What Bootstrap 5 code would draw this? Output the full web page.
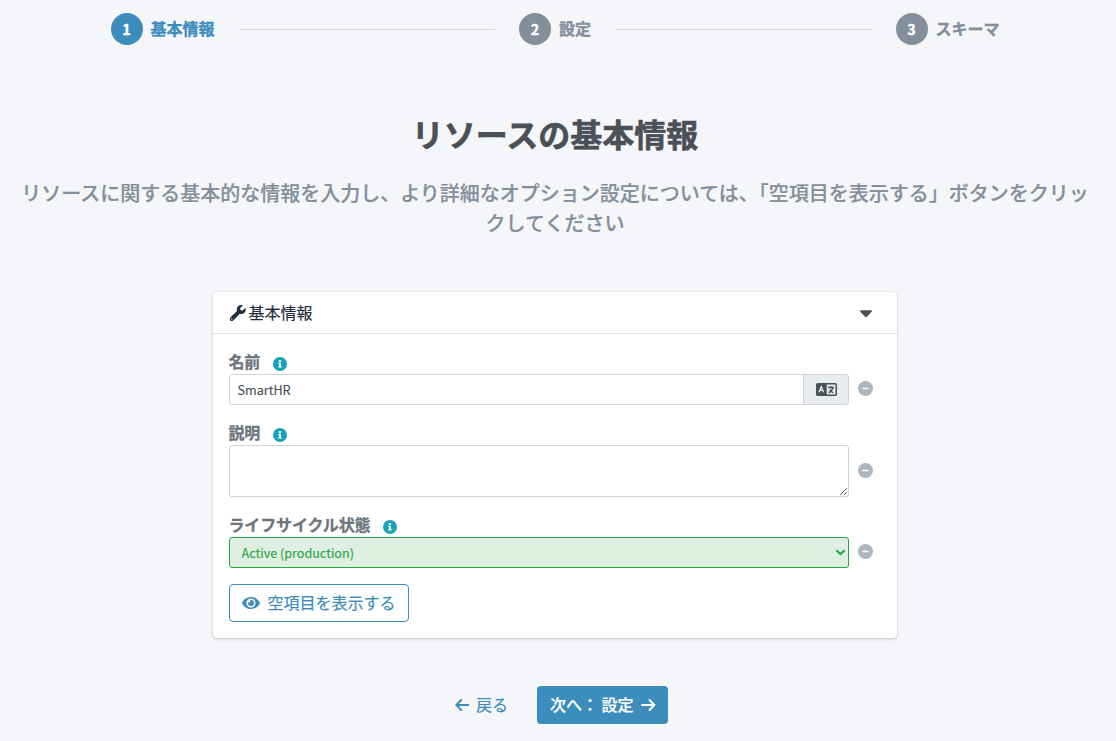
<!DOCTYPE html>
<html lang="ja">
<head>
<meta charset="utf-8">
<meta name="viewport" content="width=device-width, initial-scale=1">
<title>リソースの基本情報</title>
<link href="https://cdn.jsdelivr.net/npm/bootstrap@5.3.0/dist/css/bootstrap.min.css" rel="stylesheet">
<style>
  body { background: #f4f6fa; color: #495057; font-family: "Noto Sans CJK JP", sans-serif; overflow: hidden; }
  svg { display: block; flex: none; }
  .page { width: 1110px; }
  .stepper { width: 937px; height: 58px; }
  .step { padding: 0 24px; font-weight: 700; color: #838f9b; line-height: 24px; -webkit-text-stroke: .35px currentColor; }
  .step.current { color: #3c8dbc; }
  .step-no { width: 32px; height: 32px; background: #838f9b; color: #fff; margin-right: 8px; font-size: 14.4px; }
  .step-name { padding-bottom: 2px; }
  .current .step-no { background: #3c8dbc; }
  .step-line { height: 1px; background: #d3d8dd; }
  .title { font-size: 32px; font-weight: 700; line-height: 38px; margin: 56px 0 26px; color: #495057; -webkit-text-stroke: .6px currentColor; }
  .intro { font-size: 20px; font-weight: 500; line-height: 30px; color: #838f9b; padding: 0 15px; margin-bottom: 54px; -webkit-text-stroke: .2px currentColor; }
  .panel { width: 684px; height: 346px; border: 0; border-radius: 4px; box-shadow: 0 0 1px rgba(0,0,0,.13), 0 1px 3px rgba(0,0,0,.2); }
  .panel-head { height: 42px; padding: 0 25px 0 16px; border-bottom: 1px solid #dee2e6; color: #1f2d3d; }
  .panel-name { padding-bottom: 1px; margin-left: 2.5px; -webkit-text-stroke: .2px currentColor; }
  .caret { margin: 2px 0 0 auto; }
  .panel-form { padding: 16px; }
  .field { margin-bottom: 16px; }
  .field-label { height: 24px; line-height: 22px; font-weight: 700; color: #6c757d; -webkit-text-stroke: .3px currentColor; letter-spacing: -.15px; }
  .field-label span { padding-bottom: 2px; margin-left: -.5px; }
  .field-label svg { margin: 3px 0 0 12.3px; }
  .control-row { width: 644px; }
  .control-row .form-control, .control-row .form-select, .translate { font-size: 12.6px; line-height: 21px; border-radius: 3px; color: #495057; border-color: #ced4da; -webkit-text-stroke: .15px currentColor; }
  .control-row input.form-control { height: 31px; padding: 4px 8px 4px 7.5px; }
  .control-row textarea.form-control { height: 52px; min-height: 52px; padding: 4px 8px; }
  .translate { width: 46px; background: #e9ecef; padding: 0; justify-content: center; }
  .control-row .form-select { height: 31px; padding: 4px 12px 4px 11.5px; color: #28a745; border-color: #28a745; background-color: #dff0e3; background-image: none; }
  .select-arrow { right: 3px; top: 12px; }
  .minus { margin-left: 9px; margin-top: -3px; }
  .minus-tall { margin-top: -1px; }
  .btn { --bs-btn-border-radius: 4px; height: 38px; padding: 0 12px; --bs-btn-color: #3c8dbc; }
  .btn span { padding-bottom: 2px; -webkit-text-stroke: .2px currentColor; }
  .btn-show { width: 180px; padding-left: 11.5px; border-color: #3c8dbc; gap: 8px; }
  .actions { margin-top: 48px; margin-left: 455px; }
  .btn-back { width: 82px; padding: 0; gap: 6px; }
  .btn-next { width: 131px; padding-left: 13px; background: #3c8dbc; --bs-btn-color: #fff; font-weight: 500; gap: 7px; }
</style>
</head>
<body>
<svg width="0" height="0" class="position-absolute" aria-hidden="true">
  <symbol id="info" viewBox="0 0 14 14"><circle cx="7" cy="7" r="7" fill="#17a2b8"/><path fill="#fff" d="M5.9 3h2v2h-2zM5.2 5.8h2.7v3.4h.8v1.4H5.2V9.2H6V7.1h-.8z"/></symbol>
  <symbol id="remove" viewBox="0 0 14 14"><circle cx="7" cy="7" r="7" fill="#adb5bd"/><rect x="4" y="6.2" width="6" height="1.6" rx=".7" fill="#fff"/></symbol>
</svg>
<main class="page">
  <nav class="stepper mx-auto d-flex align-items-center">
    <div class="step current d-flex align-items-center"><span class="step-no rounded-circle d-flex align-items-center justify-content-center">1</span><span class="step-name">基本情報</span></div>
    <div class="step-line flex-fill"></div>
    <div class="step d-flex align-items-center"><span class="step-no rounded-circle d-flex align-items-center justify-content-center">2</span><span class="step-name">設定</span></div>
    <div class="step-line flex-fill"></div>
    <div class="step d-flex align-items-center"><span class="step-no rounded-circle d-flex align-items-center justify-content-center">3</span><span class="step-name">スキーマ</span></div>
  </nav>
  <h1 class="title text-center">リソースの基本情報</h1>
  <p class="intro text-center">リソースに関する基本的な情報を入力し、より詳細なオプション設定については、「空項目を表示する」ボタンをクリックしてください</p>

  <section class="panel card mx-auto">
    <div class="panel-head d-flex align-items-center">
      <svg width="17" height="16" viewBox="-16 0 528 512" fill="currentColor"><path d="M507.7 109.1c-2.2-9-13.5-12.1-20.1-5.5l-74.4 74.4-67.9-11.3-11.3-67.9 74.4-74.4c6.6-6.6 3.4-17.9-5.7-20.2-47.4-11.7-99.6.9-136.6 37.9-39.6 39.6-50.5 97.1-34.1 147.2L18.7 402.8c-25 25-25 65.5 0 90.5s65.5 25 90.5 0l213.2-213.2c50.1 16.7 107.5 5.7 147.4-34.2 37-37 49.7-89.4 37.9-136.8zM64 472a24 24 0 1 1 0-48 24 24 0 0 1 0 48z"/></svg>
      <span class="panel-name">基本情報</span>
      <svg class="caret" width="12" height="8" viewBox="0 0 12 8" fill="#495057"><path d="M1 .3h10c.9 0 1.2.9.6 1.5L7 6.7c-.6.6-1.4.6-2 0L.4 1.8C-.2 1.2.1.3 1 .3z"/></svg>
    </div>
    <form class="panel-form">
      <div class="field">
        <div class="field-label d-flex align-items-center"><span>名前</span><svg width="14" height="14"><use href="#info"/></svg></div>
        <div class="control-row d-flex align-items-center">
          <div class="input-group flex-nowrap">
            <input class="form-control" value="SmartHR" aria-label="名前">
            <span class="input-group-text translate"><svg width="21" height="13" viewBox="0 0 21 13"><rect width="21" height="13" rx="1.7" fill="#495057"/><rect x="10.7" y="1.5" width="8.8" height="10" fill="#e9ecef"/><path d="M3 9.2 5.3 3.7 7.6 9.2M3.8 7.4h3" stroke="#e9ecef" stroke-width="1.3" fill="none"/><path d="M12 4.5h6.2M15.1 2.9v1.6M16.8 4.8Q16 8.3 12.6 9.8M13.8 6.6Q14.8 9 17.4 9.8" stroke="#495057" stroke-width="1.3" fill="none"/></svg></span>
          </div>
          <svg class="minus" width="15" height="15"><use href="#remove"/></svg>
        </div>
      </div>
      <div class="field">
        <div class="field-label d-flex align-items-center"><span>説明</span><svg width="14" height="14"><use href="#info"/></svg></div>
        <div class="control-row d-flex align-items-center">
          <textarea class="form-control" rows="2" aria-label="説明"></textarea>
          <svg class="minus minus-tall" width="15" height="15"><use href="#remove"/></svg>
        </div>
      </div>
      <div class="field">
        <div class="field-label d-flex align-items-center"><span>ライフサイクル状態</span><svg width="14" height="14"><use href="#info"/></svg></div>
        <div class="control-row d-flex align-items-center">
          <div class="position-relative flex-fill">
            <select class="form-select" aria-label="ライフサイクル状態"><option>Active (production)</option></select>
            <svg class="select-arrow position-absolute" width="11" height="7" viewBox="0 0 11 7"><path d="M1.3 1.3 5.5 5.1 9.7 1.3" stroke="#28a745" stroke-width="2.2" fill="none"/></svg>
          </div>
          <svg class="minus" width="15" height="15"><use href="#remove"/></svg>
        </div>
      </div>
      <button type="button" class="btn btn-show d-flex align-items-center">
        <svg width="18" height="16" viewBox="0 0 576 512" fill="currentColor"><path d="M572.5 241.4C518.3 135.6 410.9 64 288 64S57.7 135.6 3.5 241.4a32.4 32.4 0 0 0 0 29.2C57.7 376.4 165.1 448 288 448s230.3-71.6 284.5-177.4a32.4 32.4 0 0 0 0-29.2zM288 400a144 144 0 1 1 144-144 143.9 143.9 0 0 1-144 144zm0-240a95.3 95.3 0 0 0-25.3 3.8 47.9 47.9 0 0 1-66.9 66.9A95.8 95.8 0 1 0 288 160z"/></svg>
        <span>空項目を表示する</span>
      </button>
    </form>
  </section>

  <div class="actions d-flex">
    <button type="button" class="btn btn-back border-0 d-flex align-items-center"><svg width="15" height="14" viewBox="0 0 15 14" fill="none" stroke="currentColor" stroke-width="2" stroke-linecap="round" stroke-linejoin="round"><path d="M13.3 7H1.5M6.2 2 1.3 7l4.9 5"/></svg><span>戻る</span></button>
    <button type="button" class="btn btn-next border-0 d-flex align-items-center"><span>次へ： 設定</span><svg width="15" height="14" viewBox="0 0 15 14" fill="none" stroke="currentColor" stroke-width="2" stroke-linecap="round" stroke-linejoin="round"><path d="M1 7h12.2M8.5 2l4.9 5-4.9 5"/></svg></button>
  </div>
</main>
<script src="https://cdn.jsdelivr.net/npm/bootstrap@5.3.0/dist/js/bootstrap.bundle.min.js"></script>
</body>
</html>
